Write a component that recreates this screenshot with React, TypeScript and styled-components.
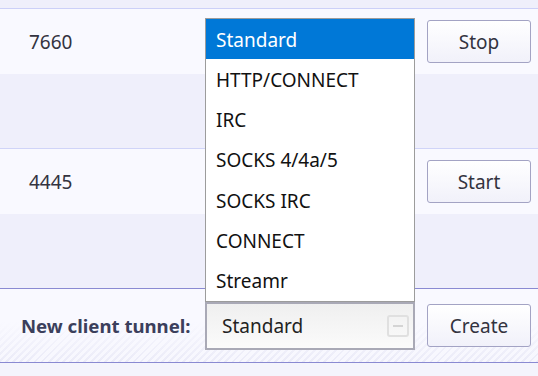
import React from 'react';
import styled, { createGlobalStyle } from 'styled-components';

const FONT = `'Noto Sans', 'Open Sans', sans-serif`;

const GlobalStyle = createGlobalStyle`
    html, body {
        margin: 0;
        padding: 0;
        background: #f4f4fc;
        font-family: ${FONT};
    }
`;

const Page = styled.div`
    width: 538px;
    height: 376px;
    overflow: hidden;
    background: #f4f4fc;
    display: flex;
    flex-direction: column;
`;

const TopStrip = styled.div`
    height: 8px;
    background: #efeffb;
    border-bottom: 1px solid #ccd0f8;
`;

const TunnelRow = styled.div`
    height: 65px;
    background: #f9f9ff;
    display: flex;
    align-items: center;
`;

const PortCell = styled.div`
    width: 205px;
    box-sizing: border-box;
    padding-left: 29px;
    padding-top: 1px;
    font-size: 19px;
    color: #333340;
`;

const SelectColumn = styled.div`
    width: 210px;
    align-self: stretch;
`;

const Band = styled.div<{ $strong?: boolean }>`
    height: 74px;
    background: #efeffb;
    border-bottom: 1px solid ${(p) => (p.$strong ? '#8a8ad2' : '#d0d4f8')};
`;

const Footer = styled.div`
    height: 73px;
    display: flex;
    align-items: center;
    border-bottom: 1px solid #8a8ad2;
    background:
        linear-gradient(to bottom, #f9f9ff 0%, #f9f9ff 45%, rgba(249, 249, 255, 0) 100%),
        repeating-linear-gradient(135deg, #ebebf8 0px, #ebebf8 2px, #f7f7fe 2px, #f7f7fe 5px);
`;

const Label = styled.div`
    width: 205px;
    box-sizing: border-box;
    padding-left: 21px;
    font-size: 18.6px;
    font-weight: 700;
    color: #3b3f5c;
    white-space: nowrap;
`;

const SelectWrap = styled.div`
    width: 210px;
    position: relative;
    align-self: flex-start;
    margin-top: 13px;
`;

const SelectBox = styled.div`
    height: 48px;
    box-sizing: border-box;
    border: 2px solid #a9a9b6;
    background: linear-gradient(to bottom, #efefef, #fbfbfb);
    display: flex;
    align-items: center;
    justify-content: space-between;
    padding: 0 4px 0 15px;
    font-size: 19px;
    color: #222;
`;

const SelectIcon = styled.div`
    width: 18px;
    height: 18px;
    border: 2px solid #e0e0e0;
    border-radius: 3px;
    display: flex;
    align-items: center;
    justify-content: center;

    &::after {
        content: '';
        width: 10px;
        height: 2px;
        background: #d4d4d4;
    }
`;

const OptionList = styled.ul`
    position: absolute;
    left: 0;
    bottom: 100%;
    width: 210px;
    box-sizing: border-box;
    margin: 0;
    padding: 0;
    list-style: none;
    background: #fff;
    border: 1px solid #9c9c9c;
    z-index: 2;
`;

const OptionItem = styled.li<{ $selected?: boolean }>`
    height: 40.3px;
    display: flex;
    align-items: center;
    padding: 1px 0 0 10px;
    box-sizing: border-box;
    font-size: 19px;
    color: ${(p) => (p.$selected ? '#fff' : '#111')};
    background: ${(p) => (p.$selected ? '#0078d7' : '#fff')};
`;

const Button = styled.button`
    margin-left: 12px;
    width: 104px;
    height: 43px;
    box-sizing: border-box;
    border: 1px solid #a3a3c4;
    border-radius: 3px;
    background: linear-gradient(to bottom, #ffffff, #f1f1fa);
    font-family: ${FONT};
    font-size: 19px;
    color: #333340;
    padding: 0;
`;

const OPTIONS = ['Standard', 'HTTP/CONNECT', 'IRC', 'SOCKS 4/4a/5', 'SOCKS IRC', 'CONNECT', 'Streamr'];

const tunnels = [
    { port: '7660', action: 'Stop' },
    { port: '4445', action: 'Start' },
];

const App = () => {
    const [selected, setSelected] = React.useState('Standard');

    return (
        <Page>
            <GlobalStyle />
            <TopStrip />
            {tunnels.map((t, i) => (
                <React.Fragment key={t.port}>
                    <TunnelRow>
                        <PortCell>{t.port}</PortCell>
                        <SelectColumn />
                        <Button>{t.action}</Button>
                    </TunnelRow>
                    <Band $strong={i === tunnels.length - 1} />
                </React.Fragment>
            ))}
            <Footer>
                <Label>New client tunnel:</Label>
                <SelectWrap>
                    <OptionList>
                        {OPTIONS.map((o) => (
                            <OptionItem key={o} $selected={o === selected} onClick={() => setSelected(o)}>
                                {o}
                            </OptionItem>
                        ))}
                    </OptionList>
                    <SelectBox>
                        {selected}
                        <SelectIcon />
                    </SelectBox>
                </SelectWrap>
                <Button>Create</Button>
            </Footer>
        </Page>
    );
};

export default App;
